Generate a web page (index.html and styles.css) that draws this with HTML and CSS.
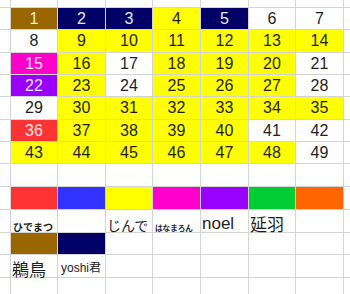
FILE: index.html
```html
<!DOCTYPE html>
<html lang="ja">
<head>
<meta charset="utf-8">
<title>Sheet</title>
<link rel="stylesheet" href="styles.css">
</head>
<body>
<div class="sheet">
  <!-- top partial row -->
  <div class="c"></div><div class="c"></div><div class="c"></div><div class="c"></div><div class="c"></div><div class="c"></div><div class="c"></div><div class="c"></div><div class="c"></div>
  <!-- row 1 -->
  <div class="c"></div>
  <div class="c n br">1</div><div class="c n nv">2</div><div class="c n nv">3</div><div class="c n y">4</div><div class="c n nv">5</div><div class="c n">6</div><div class="c n">7</div>
  <div class="c"></div>
  <!-- row 2 -->
  <div class="c"></div>
  <div class="c n">8</div><div class="c n y">9</div><div class="c n y">10</div><div class="c n y">11</div><div class="c n y">12</div><div class="c n y">13</div><div class="c n y">14</div>
  <div class="c"></div>
  <!-- row 3 -->
  <div class="c"></div>
  <div class="c n mg">15</div><div class="c n y">16</div><div class="c n">17</div><div class="c n y">18</div><div class="c n y">19</div><div class="c n y">20</div><div class="c n">21</div>
  <div class="c"></div>
  <!-- row 4 -->
  <div class="c"></div>
  <div class="c n pu">22</div><div class="c n y">23</div><div class="c n">24</div><div class="c n y">25</div><div class="c n y">26</div><div class="c n y">27</div><div class="c n">28</div>
  <div class="c"></div>
  <!-- row 5 -->
  <div class="c"></div>
  <div class="c n">29</div><div class="c n y">30</div><div class="c n y">31</div><div class="c n y">32</div><div class="c n y">33</div><div class="c n y">34</div><div class="c n y">35</div>
  <div class="c"></div>
  <!-- row 6 -->
  <div class="c"></div>
  <div class="c n rd">36</div><div class="c n y">37</div><div class="c n y">38</div><div class="c n y">39</div><div class="c n y">40</div><div class="c n">41</div><div class="c n">42</div>
  <div class="c"></div>
  <!-- row 7 -->
  <div class="c"></div>
  <div class="c n y">43</div><div class="c n y">44</div><div class="c n y">45</div><div class="c n y">46</div><div class="c n y">47</div><div class="c n y">48</div><div class="c n">49</div>
  <div class="c"></div>
  <!-- blank row -->
  <div class="c"></div><div class="c"></div><div class="c"></div><div class="c"></div><div class="c"></div><div class="c"></div><div class="c"></div><div class="c"></div><div class="c"></div>
  <!-- colour row 1 -->
  <div class="c"></div>
  <div class="c rd"></div><div class="c bl"></div><div class="c y"></div><div class="c mg2"></div><div class="c pu"></div><div class="c gr"></div><div class="c or"></div>
  <div class="c"></div>
  <!-- name row 1 -->
  <div class="c"></div>
  <div class="c nm tiny">ひでまつ</div><div class="c nm"></div><div class="c nm mid">じんで</div><div class="c nm micro">はなまろん</div><div class="c nm big lat">noel</div><div class="c nm big">延羽</div><div class="c nm"></div>
  <div class="c"></div>
  <!-- colour row 2 -->
  <div class="c"></div>
  <div class="c br"></div><div class="c nv"></div><div class="c"></div><div class="c"></div><div class="c"></div><div class="c"></div><div class="c"></div>
  <div class="c"></div>
  <!-- name row 2 -->
  <div class="c"></div>
  <div class="c nm big">鵜鳥</div><div class="c nm small">yoshi君</div><div class="c nm"></div><div class="c nm"></div><div class="c nm"></div><div class="c nm"></div><div class="c nm"></div>
  <div class="c"></div>
  <!-- bottom partial row -->
  <div class="c"></div><div class="c"></div><div class="c"></div><div class="c"></div><div class="c"></div><div class="c"></div><div class="c"></div><div class="c"></div><div class="c"></div>
</div>
</body>
</html>
```

FILE: styles.css
```css
html, body {
  margin: 0;
  padding: 0;
  background: #ffffff;
}

.sheet {
  width: 350px;
  height: 294px;
  overflow: hidden;
  display: grid;
  grid-template-columns: 10px 46px 47px 46px 47px 47px 46px 47px 1fr;
  grid-template-rows: 7px 21px 22px 21px 21px 22px 21px 21px 22px 22px 22px 21px 22px 1fr;
  gap: 1px;
  background: #d4d4d4;
  font-family: "Liberation Sans", Arial, "Noto Sans CJK JP", sans-serif;
  color: #1e1e1e;
}

.c {
  background: #ffffff;
  overflow: visible;
  white-space: nowrap;
  min-width: 0;
}

.n {
  font-size: 16px;
  line-height: 22px;
  text-align: center;
}

.y { background: #ffff00; }
.br { background: #996600; color: #f7ecd6; }
.nv { background: #000066; color: #e8e8f4; }
.mg { background: #ff00cc; color: #ffe6f6; }
.mg2 { background: #ff00cc; }
.pu { background: #9900ff; color: #f0e4ff; }
.rd { background: #ff3333; color: #ffe4e4; }
.bl { background: #3333ff; }
.gr { background: #00cc33; }
.or { background: #ff6600; }

.nm {
  display: flex;
  align-items: flex-end;
  font-family: "Noto Sans CJK JP", "Liberation Sans", sans-serif;
  line-height: 1;
  padding-left: 1px;
  color: #1e1e1e;
}

.tiny {
  font-size: 10px;
  font-weight: 700;
  padding-left: 2px;
  padding-bottom: 0;
}

.micro {
  font-size: 7.6px;
  font-weight: 700;
  padding-left: 2px;
}

.mid {
  font-size: 14px;
}

.big {
  font-size: 17px;
}

.lat {
  font-family: "Liberation Sans", Arial, sans-serif;
}

.small {
  font-family: "Liberation Sans", "Noto Sans CJK JP", sans-serif;
  font-size: 12px;
  padding-left: 3px;
  padding-bottom: 3px;
}
```
